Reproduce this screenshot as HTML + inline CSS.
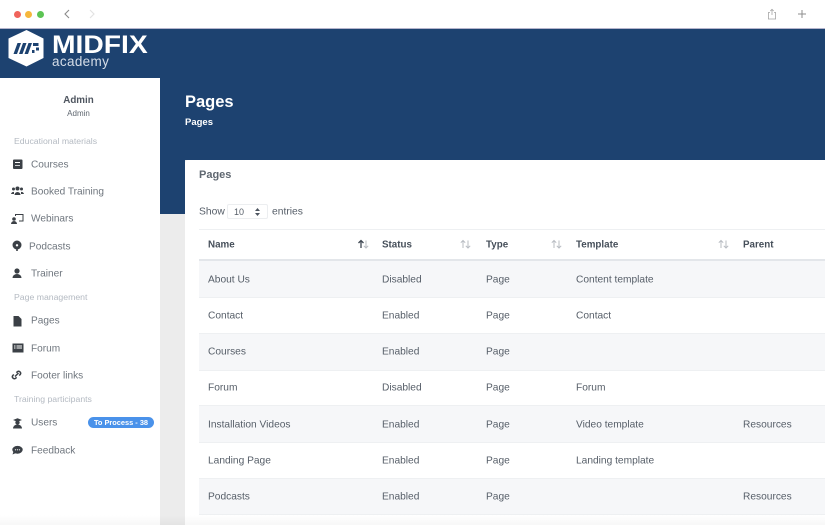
<!DOCTYPE html>
<html><head><meta charset="utf-8"><style>
html,body{margin:0;padding:0;width:825px;height:525px;overflow:hidden;background:#ececec}
body{position:relative;font-family:"Liberation Sans",sans-serif;color:#5f6770}
.a{position:absolute;white-space:nowrap;line-height:1}
.t{font-size:10.2px;color:#565e68;transform:translateY(calc(-50% + 1.5px))}
.h{font-size:9.8px;font-weight:bold;color:#464f5a;transform:translateY(calc(-50% + 1.5px))}
.n{font-size:10.1px;color:#6f767e;transform:translateY(calc(-50% + 1.5px))}
.g{font-size:8.7px;color:#b4bac2;transform:translateY(calc(-50% + .5px))}
.r{position:absolute;left:199px;width:626px;box-sizing:border-box;border-bottom:1px solid #eef0f2}
svg{position:absolute;overflow:visible}
#w{position:absolute;inset:0;filter:blur(.35px)}
</style></head><body><div id="w">
<div class="a" style="left:0;top:0;width:825px;height:28px;background:#fff"></div>
<div class="a" style="left:0;top:28px;width:825px;height:1px;background:#b4b4cc"></div>
<div class="a" style="left:14px;top:11px;width:7px;height:7px;border-radius:50%;background:#f0645c"></div>
<div class="a" style="left:25px;top:11px;width:7px;height:7px;border-radius:50%;background:#f6b73c"></div>
<div class="a" style="left:37px;top:11px;width:7px;height:7px;border-radius:50%;background:#5cc454"></div>
<svg style="left:0;top:0" width="825" height="28" fill="none"><path d="M69 10l-4 4 4 4" stroke="#8b8b8b" stroke-width="1.1"/><path d="M90 10l4 4-4 4" stroke="#e2e2e2" stroke-width="1.1"/><path d="M770 12.500h-1.600v6.500h7.200v-6.500H774M772 15V9.500M770.300 11l1.700-1.700 1.700 1.700" stroke="#a5a5a5" stroke-width=".8"/><path d="M802 10v8M798 14h8" stroke="#8e8e8e" stroke-width="1"/></svg>

<div class="a" style="left:0;top:29px;width:825px;height:131px;background:#1d4270"></div>
<div class="a" style="left:160px;top:160px;width:25px;height:54px;background:#1d4270"></div>
<div class="a" style="left:185px;top:160px;width:640px;height:365px;background:#fff;border-radius:3px 0 0 0"></div>

<svg style="left:0;top:0" width="80" height="80"><path d="M26.500 30L43.500 38.500V58L26.500 66.500L8.500 58V38.500Z" fill="#fff"/><path d="M13.500 54L17.500 43H21L17 54ZM19 54L23 43H26.500L22.500 54ZM24.500 54L28.500 43H32L28 54Z" fill="#1d4270"/><path d="M33 43h5.500v3H33ZM36 47.500h3v3h-3ZM32 50h2.500v3H32Z" fill="#1d4270"/></svg>
<div class="a" style="left:52px;top:33px;font-size:25px;font-weight:bold;color:#fff;transform-origin:0 0;transform:scaleX(1.13)">MIDFIX</div>
<div class="a" style="left:52px;top:55px;font-size:13.500px;color:#d5dde8;letter-spacing:.35px">academy</div>

<div class="a" style="left:0;top:78px;width:160px;height:447px;background:#fff"></div>
<div class="a" style="left:0;width:157px;text-align:center;top:96px;font-size:9.800px;font-weight:bold;color:#4f5660">Admin</div>
<div class="a" style="left:0;width:157px;text-align:center;top:110px;font-size:8px;color:#5f6770">Admin</div>

<div class="a g" style="left:14px;top:141px">Educational materials</div>
<div class="a n" style="left:31px;top:164px">Courses</div>
<div class="a n" style="left:31px;top:191px">Booked Training</div>
<div class="a n" style="left:31px;top:218px">Webinars</div>
<div class="a n" style="left:29px;top:246px">Podcasts</div>
<div class="a n" style="left:31px;top:273px">Trainer</div>
<div class="a g" style="left:14px;top:297px">Page management</div>
<div class="a n" style="left:31px;top:320px">Pages</div>
<div class="a n" style="left:31px;top:348px">Forum</div>
<div class="a n" style="left:31px;top:375px">Footer links</div>
<div class="a g" style="left:14px;top:399px">Training participants</div>
<div class="a n" style="left:31px;top:422px">Users</div>
<div class="a n" style="left:31px;top:450px">Feedback</div>
<div class="a" style="left:88px;top:417px;width:66px;height:11px;border-radius:6px;background:#4a92ea;color:#fff;font-size:7.400px;font-weight:bold;line-height:11px;text-align:center">To Process - 38</div>

<svg style="left:0;top:0" width="40" height="525" fill="#3b4046">
<path d="M14 159.500h7.500a1 1 0 0 1 1 1v7.500a1 1 0 0 1-1 1H14a1 1 0 0 1-1-1v-7.500a1 1 0 0 1 1-1Z"/><path d="M15 162h5v1h-5ZM15 165h5v.8h-5Z" fill="#fff"/>
<circle cx="17.500" cy="188.500" r="2"/><circle cx="13.500" cy="189" r="1.500"/><circle cx="21.500" cy="189" r="1.500"/><path d="M14.500 195a3 3 0 0 1 6 0ZM11 194a2.500 2.500 0 0 1 3-2v2ZM24 194a2.500 2.500 0 0 0-3-2v2Z"/>
<path d="M15 214h8.500v7.500H19v-1h3.500v-5.500H16v1h-1Z"/><circle cx="14" cy="219" r="1.800"/><path d="M11 224a3 3 0 0 1 6 0Z"/>
<circle cx="17" cy="245" r="4.500"/><path d="M16.200 247h1.600v4h-1.600Z"/><circle cx="17" cy="245.300" r="1.200" fill="#fff"/>
<circle cx="17" cy="271" r="2.600"/><path d="M12.500 278a4.500 4 0 0 1 9 0Z"/>
<path d="M13.500 316h5l3 3v7.500h-8Z"/>
<path d="M12.500 343.500h11v9h-11Z"/><path d="M14 345.500h1.500v1H14ZM16.500 345.500H22v1h-5.500ZM14 347.500h1.500v1H14ZM16.500 347.500H22v1h-5.500Z" fill="#fff"/>
<path d="M15 376.500l3.500-3.500M13.800 374.500l-1 1a2 2 0 0 0 2.800 2.800l1-1M19.200 375.500l1-1a2 2 0 0 0-2.800-2.800l-1 1" fill="none" stroke="#3b4046" stroke-width="1.500"/>
<path d="M13 420l4.500-1.800L22 420l-4.500 1.800Z"/><circle cx="17.500" cy="422.500" r="2.200"/><path d="M13 428.500a4.500 4 0 0 1 9 0Z"/>
<ellipse cx="17.500" cy="449.800" rx="5.200" ry="3.900"/><path d="M13.500 451.500l-1 3 3.500-1.500Z"/><circle cx="15.500" cy="449.800" r=".6" fill="#fff"/><circle cx="17.500" cy="449.800" r=".6" fill="#fff"/><circle cx="19.500" cy="449.800" r=".6" fill="#fff"/>
</svg>

<div class="a" style="left:185px;top:94px;font-size:16.500px;font-weight:bold;color:#fff">Pages</div>
<div class="a" style="left:185px;top:118px;font-size:9.500px;font-weight:bold;color:#fff">Pages</div>

<div class="a" style="left:199px;top:170px;font-size:11px;font-weight:bold;color:#5f6770">Pages</div>
<div class="a t" style="left:199px;top:211px;font-size:10.300px">Show</div>
<div class="a" style="left:227px;top:204px;width:41px;height:15px;box-sizing:border-box;border:1px solid #eceef0;border-radius:2px;background:#fff"></div>
<div class="a t" style="left:234px;top:211px;font-size:9px">10</div>
<svg style="left:0;top:0" width="270" height="225" fill="#4d5560"><path d="M255 211l2.500-3 2.500 3ZM255 213l2.500 3 2.500-3Z"/></svg>
<div class="a t" style="left:272px;top:211px;font-size:10.300px">entries</div>

<div class="r" style="top:229px;height:1px;background:#eef0f2;border:0"></div>
<div class="r" style="top:259px;height:2px;background:#e3e6ea;border:0"></div>
<div class="r" style="top:261px;height:37px;background:#f6f7f9"></div>
<div class="r" style="top:298px;height:36px;background:#fff"></div>
<div class="r" style="top:334px;height:37px;background:#f6f7f9"></div>
<div class="r" style="top:371px;height:35px;background:#fff"></div>
<div class="r" style="top:406px;height:37px;background:#f6f7f9"></div>
<div class="r" style="top:443px;height:36px;background:#fff"></div>
<div class="r" style="top:479px;height:36px;background:#f6f7f9"></div>

<div class="a h" style="left:208px;top:244px">Name</div>
<div class="a h" style="left:382px;top:244px">Status</div>
<div class="a h" style="left:486px;top:244px">Type</div>
<div class="a h" style="left:576px;top:244px">Template</div>
<div class="a h" style="left:743px;top:244px">Parent</div>
<svg style="left:0;top:0" width="825" height="260" fill="none" stroke-width="1">
<path d="M361 248v-7.500M358.500 243l2.500-2.500 2.500 2.500" stroke="#3f4853" stroke-width="1.300"/><path d="M366 240.500v7.500M363.800 245.800l2.200 2.200 2.200-2.200" stroke="#b8bcc2"/>
<path d="M463 248v-7.500M460.800 242.700l2.200-2.200 2.200 2.200M468 240.500v7.500M465.800 245.800l2.200 2.200 2.200-2.200" stroke="#b8bcc2"/>
<path d="M554 248v-7.500M551.800 242.700l2.200-2.200 2.200 2.200M559 240.500v7.500M556.800 245.800l2.200 2.200 2.200-2.200" stroke="#b8bcc2"/>
<path d="M721 248v-7.500M718.800 242.700l2.200-2.200 2.200 2.200M726 240.500v7.500M723.800 245.800l2.200 2.200 2.200-2.200" stroke="#b8bcc2"/>
</svg>

<div class="a t" style="left:208px;top:279px">About Us</div><div class="a t" style="left:382px;top:279px">Disabled</div><div class="a t" style="left:486px;top:279px">Page</div><div class="a t" style="left:576px;top:279px">Content template</div>
<div class="a t" style="left:208px;top:315px">Contact</div><div class="a t" style="left:382px;top:315px">Enabled</div><div class="a t" style="left:486px;top:315px">Page</div><div class="a t" style="left:576px;top:315px">Contact</div>
<div class="a t" style="left:208px;top:351px">Courses</div><div class="a t" style="left:382px;top:351px">Enabled</div><div class="a t" style="left:486px;top:351px">Page</div>
<div class="a t" style="left:208px;top:387px">Forum</div><div class="a t" style="left:382px;top:387px">Disabled</div><div class="a t" style="left:486px;top:387px">Page</div><div class="a t" style="left:576px;top:387px">Forum</div>
<div class="a t" style="left:208px;top:424px">Installation Videos</div><div class="a t" style="left:382px;top:424px">Enabled</div><div class="a t" style="left:486px;top:424px">Page</div><div class="a t" style="left:576px;top:424px">Video template</div><div class="a t" style="left:743px;top:424px">Resources</div>
<div class="a t" style="left:208px;top:460px">Landing Page</div><div class="a t" style="left:382px;top:460px">Enabled</div><div class="a t" style="left:486px;top:460px">Page</div><div class="a t" style="left:576px;top:460px">Landing template</div>
<div class="a t" style="left:208px;top:496px">Podcasts</div><div class="a t" style="left:382px;top:496px">Enabled</div><div class="a t" style="left:486px;top:496px">Page</div><div class="a t" style="left:743px;top:496px">Resources</div>
<div class="a" style="left:0;top:515px;width:825px;height:10px;background:linear-gradient(rgba(0,0,0,0),rgba(0,0,0,.03))"></div>
</div></body></html>
